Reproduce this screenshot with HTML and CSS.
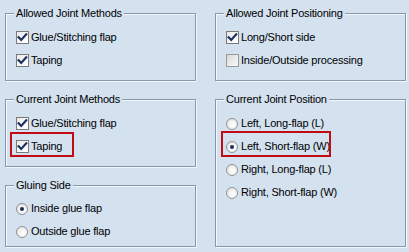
FILE: index.html
```html
<!DOCTYPE html>
<html>
<head>
<meta charset="utf-8">
<link rel="stylesheet" href="styles.css">
</head>
<body>
<div class="panel">
  <div class="col">
    <fieldset class="group g-short">
      <legend>Allowed Joint Methods</legend>
      <div class="item"><span class="cb"><svg viewBox="0 0 13 13" width="13" height="13"><path d="M2.6 6.2 L5.2 8.9 L10.2 3.4" /></svg></span><span class="lbl">Glue/Stitching flap</span></div>
      <div class="item"><span class="cb"><svg viewBox="0 0 13 13" width="13" height="13"><path d="M2.6 6.2 L5.2 8.9 L10.2 3.4" /></svg></span><span class="lbl">Taping</span></div>
    </fieldset>
    <fieldset class="group g-short">
      <legend>Current Joint Methods</legend>
      <div class="item"><span class="cb"><svg viewBox="0 0 13 13" width="13" height="13"><path d="M2.6 6.2 L5.2 8.9 L10.2 3.4" /></svg></span><span class="lbl">Glue/Stitching flap</span></div>
      <div class="item hl hl-taping"><span class="cb"><svg viewBox="0 0 13 13" width="13" height="13"><path d="M2.6 6.2 L5.2 8.9 L10.2 3.4" /></svg></span><span class="lbl">Taping</span></div>
    </fieldset>
    <fieldset class="group g-glue">
      <legend>Gluing Side</legend>
      <div class="item"><span class="rb on"><span class="dot"></span></span><span class="lbl">Inside glue flap</span></div>
      <div class="item"><span class="rb"></span><span class="lbl">Outside glue flap</span></div>
    </fieldset>
  </div>
  <div class="col">
    <fieldset class="group g-short">
      <legend>Allowed Joint Positioning</legend>
      <div class="item"><span class="cb"><svg viewBox="0 0 13 13" width="13" height="13"><path d="M2.6 6.2 L5.2 8.9 L10.2 3.4" /></svg></span><span class="lbl">Long/Short side</span></div>
      <div class="item"><span class="cb off"></span><span class="lbl">Inside/Outside processing</span></div>
    </fieldset>
    <fieldset class="group g-tall">
      <legend>Current Joint Position</legend>
      <div class="item"><span class="rb"></span><span class="lbl">Left, Long-flap (L)</span></div>
      <div class="item hl hl-pos"><span class="rb on"><span class="dot"></span></span><span class="lbl">Left, Short-flap (W)</span></div>
      <div class="item"><span class="rb"></span><span class="lbl">Right, Long-flap (L)</span></div>
      <div class="item"><span class="rb"></span><span class="lbl">Right, Short-flap (W)</span></div>
    </fieldset>
  </div>
</div>
</body>
</html>
```

FILE: styles.css
```css
html, body {
  margin: 0;
  padding: 0;
  background: #d4e2f0;
}
body {
  font-family: "Liberation Sans", Arial, sans-serif;
  font-size: 11px;
  letter-spacing: -0.2px;
  color: #000;
  width: 409px;
  height: 252px;
  overflow: hidden;
}
.panel {
  display: flex;
  gap: 19px;
  padding: 7px 0 0 5px;
}
.col {
  display: flex;
  flex-direction: column;
  gap: 12px;
  width: 191px;
}
.group {
  margin: 0;
  padding: 6px 0 0 10px;
  border: 1px solid #8598b0;
  box-shadow: inset 1px 1px 0 #f4f8fc, 1px 1px 0 #f4f8fc;
  min-width: 0;
  box-sizing: border-box;
}
.g-short { height: 74px; }
.g-glue { height: 68px; padding-top: 5px; }
.g-tall { height: 154px; }
legend {
  padding: 0 2px;
  margin-left: -2px;
  line-height: 13px;
  background: #d4e2f0;
}
.item {
  display: flex;
  align-items: center;
  height: 23px;
  gap: 2px;
  line-height: 13px;
}
.lbl { white-space: nowrap; }
.cb {
  width: 13px;
  height: 13px;
  box-sizing: border-box;
  border: 1px solid #7a7a7a;
  background: linear-gradient(135deg, #e9e9e9 0%, #fafafa 60%, #ffffff 100%);
  position: relative;
  flex: none;
}
.cb.off {
  border-color: #9a9a9a;
  background: linear-gradient(135deg, #d8d8d8 0%, #eeeeee 60%, #f7f7f7 100%);
}
.cb svg {
  display: block;
  margin: -1px;
}
.cb path {
  fill: none;
  stroke: #1c3160;
  stroke-width: 2.2;
  stroke-linecap: square;
  stroke-linejoin: miter;
}
.rb {
  width: 12px;
  height: 12px;
  box-sizing: border-box;
  border: 1px solid #929292;
  border-radius: 50%;
  background: radial-gradient(circle at 60% 60%, #ffffff 0%, #f2f2f2 45%, #d6d6d6 100%);
  display: flex;
  align-items: center;
  justify-content: center;
  flex: none;
  margin-right: 1px;
}
.rb .dot {
  width: 4px;
  height: 4px;
  border-radius: 50%;
  background: #1a2c58;
}
.hl { position: relative; }
.hl::before {
  content: "";
  position: absolute;
  border: 2px solid #c20a14;
  box-sizing: border-box;
}
.hl-taping::before {
  left: -6px;
  top: -3px;
  width: 64px;
  height: 25px;
}
.hl-pos::before {
  left: -5px;
  top: -4px;
  width: 110px;
  height: 26px;
}
```
